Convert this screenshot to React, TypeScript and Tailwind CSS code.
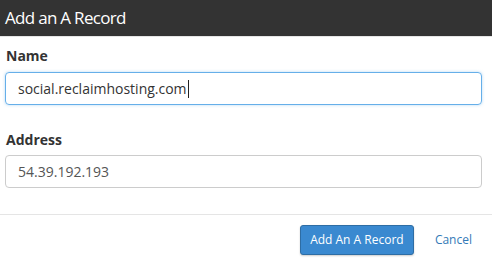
export default function App() {
  return (
    <div className="w-[492px] h-[262px] bg-white overflow-hidden font-['Open_Sans',sans-serif]">
      <div className="h-[37px] bg-[#333333] px-[5px] flex items-center border-b border-[#e5e5e5]">
        <h1 className="text-[17px] tracking-[-0.7px] text-white leading-none pb-[1px]">Add an A Record</h1>
      </div>
      <div className="px-[5px] pt-[9px]">
        <label className="block text-[14px] font-bold text-[#333] leading-[20px] pl-px">Name</label>
        <div className="mt-[6px] h-[33px] w-[477px] rounded-[4px] border border-[#66afe9] flex items-center px-[12px] text-[14px] text-[#333] shadow-[0_0_3px_rgba(102,175,233,0.5)]">
          social.reclaimhosting.com<span className="inline-block w-px h-[18px] bg-[#222] ml-px" />
        </div>
        <label className="block mt-[25px] text-[14px] font-bold text-[#333] leading-[20px] pl-px">Address</label>
        <div className="mt-[5px] h-[33px] w-[477px] rounded-[4px] border border-[#cccccc] flex items-center px-[12px] text-[14px] text-[#555]">
          54.39.192.193
        </div>
      </div>
      <div className="mt-[26px] border-t border-[#e5e5e5] flex items-center justify-end pt-[10px] pr-[20px] gap-[21px]">
        <button className="h-[30px] w-[114px] rounded-[3px] bg-[#3a89d0] border border-[#2e6da4] text-white text-[12px] shadow-[0_1px_2px_rgba(0,0,0,0.2)]">
          Add An A Record
        </button>
        <span className="text-[12px] text-[#337ab7]">Cancel</span>
      </div>
    </div>
  );
}
